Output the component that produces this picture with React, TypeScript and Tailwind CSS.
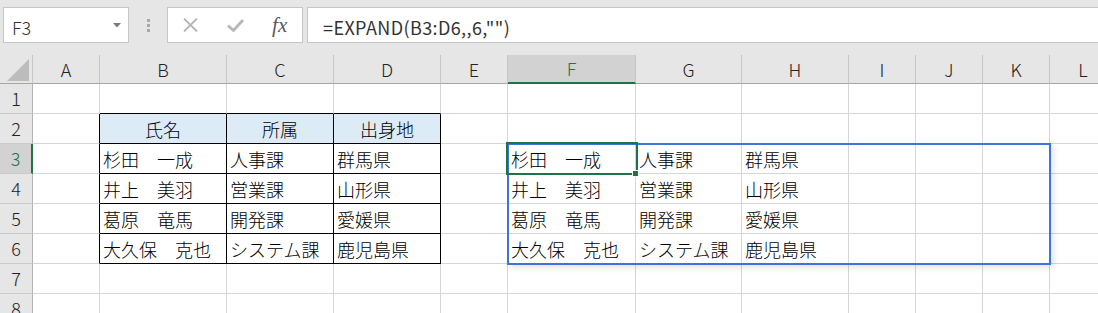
import React from 'react';

type Col = { key: string; w: string };

const COLS: Col[] = [
  { key: '', w: 'w-[33px]' },
  { key: 'A', w: 'w-[67px]' },
  { key: 'B', w: 'w-[127px]' },
  { key: 'C', w: 'w-[107px]' },
  { key: 'D', w: 'w-[107px]' },
  { key: 'E', w: 'w-[67px]' },
  { key: 'F', w: 'w-[128px]' },
  { key: 'G', w: 'w-[106px]' },
  { key: 'H', w: 'w-[107px]' },
  { key: 'I', w: 'w-[67px]' },
  { key: 'J', w: 'w-[67px]' },
  { key: 'K', w: 'w-[67px]' },
  { key: 'L', w: 'w-[67px]' },
];

const PEOPLE = [
  ['杉田　一成', '人事課', '群馬県'],
  ['井上　美羽', '営業課', '山形県'],
  ['葛原　竜馬', '開発課', '愛媛県'],
  ['大久保　克也', 'システム課', '鹿児島県'],
];

// セルの値 (B2:D6 と EXPAND の結果 F3:H6)
const cells: Record<string, string> = { B2: '氏名', C2: '所属', D2: '出身地' };
PEOPLE.forEach((p, i) => {
  const r = i + 3;
  cells[`B${r}`] = p[0];
  cells[`C${r}`] = p[1];
  cells[`D${r}`] = p[2];
  cells[`F${r}`] = p[0];
  cells[`G${r}`] = p[1];
  cells[`H${r}`] = p[2];
});

const inTable = (c: string, r: number) => ['B', 'C', 'D'].includes(c) && r >= 2 && r <= 6;

function Cell({ col, row }: { col: Col; row: number }) {
  const c = col.key;
  const header = inTable(c, row) && row === 2;
  const rightBlack = inTable(c, row) || (c === 'A' && row >= 2 && row <= 6);
  const bottomBlack = inTable(c, row) || (['B', 'C', 'D'].includes(c) && row === 1);
  return (
    <div
      className={`${col.w} shrink-0 h-full flex items-center px-[3px] pt-[1px] whitespace-nowrap text-[18px] text-black border-r border-b ${
        rightBlack ? 'border-r-black' : 'border-r-[#d6d6d6]'
      } ${bottomBlack ? 'border-b-black' : 'border-b-[#d6d6d6]'} ${
        header ? 'bg-[#ddebf7] justify-center' : 'bg-white'
      }`}
    >
      {cells[`${c}${row}`] ?? ''}
    </div>
  );
}

function RowHeader({ row }: { row: number }) {
  const sel = row === 3;
  return (
    <div
      className={`w-[33px] shrink-0 h-full flex items-center justify-center text-[18px] border-b border-b-[#cacaca] ${
        sel
          ? 'bg-[#d2d2d2] text-[#217346] border-r-2 border-r-[#217346]'
          : 'bg-[#e6e6e6] text-[#222] border-r border-r-[#b4b4b4]'
      }`}
    >
      {row}
    </div>
  );
}

function FormulaBar() {
  return (
    <div className="h-[55px] flex items-start pt-[7px] pl-[3px] bg-[#e6e6e6]">
      {/* 名前ボックス */}
      <div className="w-[126px] h-[36px] bg-white border border-[#c6c6c6] flex items-center justify-between pl-[8px] pr-[7px]">
        <span className="text-[18px] text-[#333] leading-none pt-[3px]">F3</span>
        <svg width="8" height="5" viewBox="0 0 8 5">
          <path d="M0 0 H8 L4 4.5 Z" fill="#7a7a7a" />
        </svg>
      </div>

      <div className="w-[38px] h-[36px] flex flex-col items-center justify-center gap-[2px]">
        <span className="w-[3px] h-[3px] bg-[#a8a8a8]" />
        <span className="w-[3px] h-[3px] bg-[#a8a8a8]" />
        <span className="w-[3px] h-[3px] bg-[#a8a8a8]" />
      </div>

      {/* キャンセル / 入力 / 関数の挿入 */}
      <div className="w-[136px] h-[36px] bg-white border border-[#c6c6c6] flex items-center">
        <div className="w-[45px] flex justify-center">
          <svg width="15" height="14" viewBox="0 0 15 14">
            <path d="M1 0.5 L14 13.5 M14 0.5 L1 13.5" stroke="#b5b5b5" strokeWidth="1.8" />
          </svg>
        </div>
        <div className="w-[45px] flex justify-center">
          <svg width="17" height="13" viewBox="0 0 17 13">
            <path d="M1 6.5 L6.5 11.5 L16 1" stroke="#b8b8b8" strokeWidth="2.8" fill="none" />
          </svg>
        </div>
        <div className="w-[45px] flex justify-center">
          <span className="font-['Liberation_Serif',serif] italic text-[21px] text-[#5a5a5a] leading-none">
            fx
          </span>
        </div>
      </div>

      <div className="flex-1 h-[36px] ml-[4px] -mr-[4px] bg-white border border-[#c6c6c6] flex items-center pl-[15px]">
        <span className="font-normal text-[18px] tracking-[0.4px] text-[#333] leading-none pt-[3px]">
          =EXPAND(B3:D6,,6,"")
        </span>
      </div>
    </div>
  );
}

export default function App() {
  const rows = [1, 2, 3, 4, 5, 6, 7, 8];
  return (
    <div className="w-[1098px] h-[313px] overflow-hidden bg-white font-light font-['Noto_Sans_CJK_JP','Noto_Sans',sans-serif]">
      <FormulaBar />

      <div className="relative">
        {/* 列見出し */}
        <div className="flex h-[29px] bg-[#e6e6e6]">
          <div className="w-[33px] shrink-0 h-full border-r border-r-[#c6c6c6] border-b border-b-[#a6a6a6] flex items-end justify-end pr-[3px] pb-[2px]">
            <svg width="22" height="22" viewBox="0 0 22 22">
              <path d="M22 0 V22 H0 Z" fill="#bcbcbc" />
            </svg>
          </div>
          {COLS.slice(1).map((col) => {
            const sel = col.key === 'F';
            return (
              <div
                key={col.key}
                className={`${col.w} shrink-0 h-full flex items-center justify-center text-[18px] border-r border-r-[#c6c6c6] ${
                  sel
                    ? 'bg-[#d2d2d2] text-[#217346] border-b-2 border-b-[#217346]'
                    : 'text-[#222] border-b border-b-[#a6a6a6]'
                }`}
              >
                {col.key}
              </div>
            );
          })}
        </div>

        {rows.map((r) => (
          <div key={r} className="flex h-[30px]">
            <RowHeader row={r} />
            {COLS.slice(1).map((col) => (
              <Cell key={col.key} col={col} row={r} />
            ))}
          </div>
        ))}

        {/* スピル範囲 F3:K6 */}
        <div className="absolute left-[507px] top-[88px] w-[544px] h-[122px] border-2 border-[#3a74dc] shadow-[3px_3px_6px_rgba(0,0,0,0.1)] pointer-events-none" />

        {/* アクティブセル F3 */}
        <div className="absolute left-[506px] top-[87px] w-[132px] h-[33px] border-2 border-[#217346] pointer-events-none" />
        <div className="absolute left-[632px] top-[115px] w-[7px] h-[7px] bg-[#217346] border border-white pointer-events-none" />
      </div>
    </div>
  );
}
